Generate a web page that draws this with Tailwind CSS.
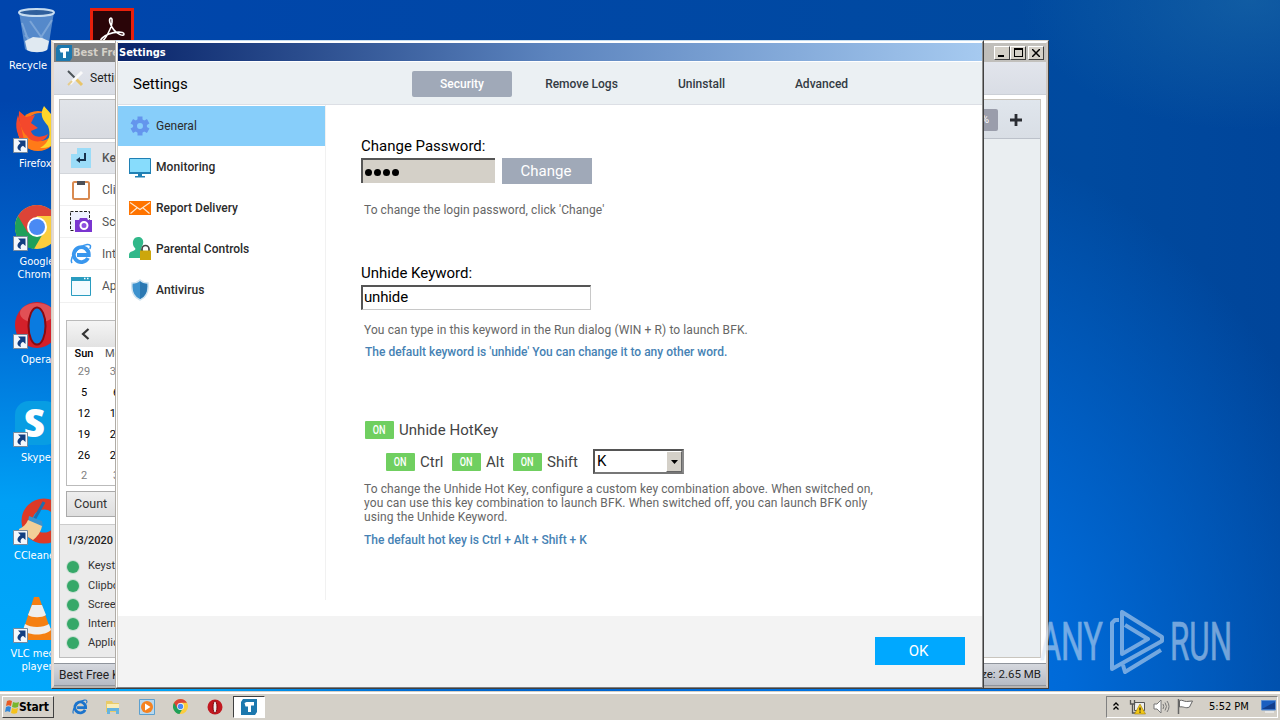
<!DOCTYPE html>
<html lang="en">

<head>
    <meta charset="UTF-8">
    <meta name="viewport" content="width=device-width, initial-scale=1.0">
    <title>Best Free Keylogger - Settings</title>
    <script src="https://cdn.jsdelivr.net/npm/@tailwindcss/browser@4"></script>
    <style>
        body {
            font-family: Roboto, "Liberation Sans", sans-serif;
        }

        .tahoma {
            font-family: "DejaVu Sans Condensed", "DejaVu Sans", sans-serif;
            font-stretch: condensed;
        }

        .wallpaper {
            background:
                radial-gradient(ellipse 230px 130px at 1250px 0, rgba(30, 110, 170, .55), transparent),
                radial-gradient(ellipse 620px 620px at 0 720px, #00aafd 0, #00a0f5 35%, rgba(0, 120, 225, .75) 65%, rgba(0, 80, 190, 0) 100%),
                radial-gradient(ellipse 520px 600px at 860px 720px, #0078e8 0, #006ad8 40%, rgba(0, 76, 170, 0) 100%),
                linear-gradient(90deg, #0045ad, #004a9f 85%, #00459a);
        }
    </style>
</head>

<body>
    <svg class="hidden">
        <symbol id="shortcut" viewBox="0 0 15 15">
            <path d="M.5.5h14v14H.5z" fill="#f4f8fc" stroke="#7a8a9c" />
            <path d="M5 2.500h7.500V10L10 7.700C7.500 9 7 10.500 8 13 4.500 12 2.500 9 7.500 5z" fill="#123e80" />
        </symbol>
        <symbol id="chrome" viewBox="0 0 44 44">
            <circle cx="22" cy="22" r="22" fill="#fbcd3e" />
            <path d="M3 11a22 22 0 0 0 16 33l9-15.500-6-7z" fill="#1fa05a" />
            <path d="M3 11 13 28l9-17h19A22 22 0 0 0 3 11z" fill="#dc4437" />
            <circle cx="22" cy="22" r="10" fill="#fff" />
            <circle cx="22" cy="22" r="8" fill="#4a8af4" />
        </symbol>
        <symbol id="opera" viewBox="0 0 44 46">
            <ellipse cx="22" cy="23" rx="22" ry="23" fill="#d3202a" />
            <ellipse cx="22" cy="11" rx="17" ry="10" fill="#f08080" opacity=".5" />
            <ellipse cx="22" cy="24" rx="8.500" ry="18.500" fill="#0a7be0" stroke="#8b0a10" stroke-width="2" />
        </symbol>
        <symbol id="ie" viewBox="0 0 22 22">
            <path d="M18 15a7.500 7.500 0 1 1 .8-3H7" fill="none" stroke="currentColor" stroke-width="3.800" />
            <path d="M2 20C-1 15 8 3 17 1.500c4-.5 4 2 2.800 4.500" fill="none" stroke="currentColor" stroke-width="1.500" />
        </symbol>
        <symbol id="bfk" viewBox="0 0 16 16">
            <path d="M2 0h14v13l-2 3H0V3z" fill="#1c78ae" />
            <path d="M3.500 4l2-1h7.500v3.500h-3V13H7V7.500H4.500z" fill="#fff" />
        </symbol>
    </svg>

    <div class="wallpaper relative h-[720px] w-[1280px] overflow-hidden">

        <!-- Desktop shortcuts -->
        <div class="tahoma text-[11px] leading-[13px] text-white">
            <svg class="absolute left-[18px] top-[8px]" width="38" height="46" viewBox="0 0 38 46">
                <path d="M1 4l6 37c4 4 19 4 23 0l6-37z" fill="#6a9ad2" opacity=".8" />
                <path d="M4 15l8 22M12 13l14 20M34 12 20 34M7 27l10 10" stroke="#b5cfec" stroke-width="2" opacity=".4" />
                <path d="M7 33l8-4 9 1 7 3-2 9c-5 3-15 3-20 0z" fill="#e0e9f1" />
                <ellipse cx="18.500" cy="4.500" rx="17.500" ry="3.500" fill="#2f5f9c" stroke="#c6dcf0" stroke-width="2" />
            </svg>
            <p class="absolute left-[9px] top-[59px]">Recycle</p>

            <svg class="absolute left-[90px] top-[8px]" width="44" height="44" viewBox="0 0 44 44">
                <path d="M1.500 1.500h41v41h-41z" fill="#2a0508" stroke="#e8200c" stroke-width="3" />
                <path d="M21 10c-3 1-1 7 3 12 3 4 10 7 10 4s-10-2-15 0c-6 2-9 6-8 7 3 2 12-15 11-21 0-1-.5-2-1-2z" fill="none" stroke="#fff" stroke-width="1.600" />
            </svg>

            <svg class="absolute left-[14px] top-[106px]" width="46" height="46" viewBox="0 0 46 46">
                <circle cx="24" cy="25" r="20" fill="#ff7a18" />
                <circle cx="26" cy="21" r="14" fill="#1464c8" />
                <path d="M5 5l7 6 9-2-4 8 7 5-7 3c2 7 10 7 17 3-3 10-17 9-21 2C8 26 4 15 5 5z" fill="#f4482c" />
                <path d="M4 9c-4 12-1 22 7 28-3-9-3-16-7-28z" fill="#f4482c" />
                <path d="M30 0c-5 9-1 14 4 20 3 8 2 16-8 22 12 1 19-7 19-17S35 6 30 0z" fill="#ffd52a" />
            </svg>
            <svg class="absolute left-[13px] top-[138px]" width="15" height="15"><use href="#shortcut" /></svg>
            <p class="absolute left-[19px] top-[157px]">Firefox</p>

            <svg class="absolute left-[15px] top-[205px]" width="44" height="44"><use href="#chrome" /></svg>
            <svg class="absolute left-[13px] top-[236px]" width="15" height="15"><use href="#shortcut" /></svg>
            <p class="absolute left-[17px] top-[255px] w-[40px] text-center">Google Chrome</p>

            <svg class="absolute left-[15px] top-[302px]" width="44" height="46"><use href="#opera" /></svg>
            <svg class="absolute left-[13px] top-[334px]" width="15" height="15"><use href="#shortcut" /></svg>
            <p class="absolute left-[21px] top-[353px]">Opera</p>

            <div class="absolute left-[15px] top-[401px] h-[44px] w-[44px] rounded-[14px] bg-[#089de3] pl-[9px] font-['Open_Sans'] text-[39px] leading-[42px] font-extrabold"><span class="inline-block origin-left scale-x-118">S</span></div>
            <svg class="absolute left-[13px] top-[432px]" width="15" height="15"><use href="#shortcut" /></svg>
            <p class="absolute left-[21px] top-[451px]">Skype</p>

            <svg class="absolute left-[19px] top-[498px]" width="44" height="46" viewBox="0 0 44 46">
                <circle cx="25" cy="23" r="17" fill="none" stroke="#dd3a26" stroke-width="11" />
                <path d="M25 4 15 22" stroke="#1f6fae" stroke-width="3" />
                <path d="M10 18l13 5 1 6-15-5z" fill="#3b93cf" />
                <path d="M9 22l14 6c-1 6-5 11-9 14L-2 32c5-2 9-5 11-10z" fill="#f2cf98" />
            </svg>
            <svg class="absolute left-[13px] top-[530px]" width="15" height="15"><use href="#shortcut" /></svg>
            <p class="absolute left-[14px] top-[549px]">CCleaner</p>

            <svg class="absolute left-[16px] top-[595px]" width="44" height="46" viewBox="0 0 44 46">
                <path d="M7 33h29l6 12H3z" fill="#f57f12" />
                <path d="M18 2h5l12 34c-6 5-22 5-28 0z" fill="#f57f12" />
                <path d="M16 10h10l4 10c-4 3-14 3-18 0zM9 29c6 4 18 4 24 0l2 6c-6 6-22 6-28 0z" fill="#eee" />
            </svg>
            <svg class="absolute left-[13px] top-[628px]" width="15" height="15"><use href="#shortcut" /></svg>
            <p class="absolute left-[9px] top-[647px] w-[56px] text-center">VLC media player</p>
        </div>

        <!-- Main window -->
        <div class="absolute left-[51px] top-[40px] flex h-[649px] w-[998px] flex-col overflow-hidden border border-t-[#d4d0c8] border-r-[#404040] border-b-[#404040] border-l-[#d4d0c8] bg-white">
            <div class="flex grow flex-col border-2 border-t-white border-r-[#cfc8c2] border-b-[#b8b4b0] border-l-[#e6dad0]">
                <div class="flex h-[19px] shrink-0 items-center bg-linear-to-r from-[#808080] to-[#c4c2be] pr-[2px] pl-[2px]">
                    <svg width="16" height="16"><use href="#bfk" /></svg>
                    <span class="tahoma ml-[1px] pt-[2px] text-[11px] font-bold text-[#d4d0c8]">Best Free Keylogger</span>
                    <div class="ml-auto flex">
                        <div class="flex h-[14px] w-[16px] items-end border border-t-white border-r-[#404040] border-b-[#404040] border-l-white bg-[#d4d0c8] pb-[2px] pl-[3px]"><i class="h-[2px] w-[6px] bg-black"></i></div>
                        <div class="flex h-[14px] w-[16px] items-center justify-center border border-t-white border-r-[#404040] border-b-[#404040] border-l-white bg-[#d4d0c8]"><i class="h-[9px] w-[9px] border border-t-2 border-black"></i></div>
                        <div class="ml-[2px] flex h-[14px] w-[16px] items-center justify-center border border-t-white border-r-[#404040] border-b-[#404040] border-l-white bg-[#d4d0c8]">
                            <svg width="8" height="8" viewBox="0 0 8 8" stroke="#000" stroke-width="1.500"><path d="M0 0l8 8M8 0 0 8" /></svg>
                        </div>
                    </div>
                </div>
                <div class="flex h-[33px] shrink-0 items-center border-b border-[#ccd0d7] bg-linear-to-b from-[#e2e5ec] to-[#d9dde5] pl-[13px]">
                    <svg width="17" height="17" viewBox="0 0 17 17">
                        <path d="M1 1l8 8" stroke="#4b5257" stroke-width="2" />
                        <path d="M9 9l6 6" stroke="#e8c468" stroke-width="3" />
                        <path d="M15 2l-4 4L3 14" stroke="#fafafa" stroke-width="3" />
                        <path d="M1 15l4-4" stroke="#e5cc8d" stroke-width="2" />
                    </svg>
                    <span class="ml-[6px] text-[12px] text-[#222]">Settings</span>
                </div>
                <div class="flex h-[568px] shrink-0 px-[5px] pt-[4px] pb-[5px]">
                    <!-- Left column, mostly covered by the dialog -->
                    <div class="flex w-[300px] flex-col border border-[#bdbdbd] text-[#555]">
                        <div class="h-[39px] shrink-0 border-b border-[#c0c4ca] bg-linear-to-b from-[#e1e4e9] to-[#d8dbe1]"></div>
                        <div class="mt-[3px] flex h-[32px] shrink-0 items-center border-y border-[#d3d6db] bg-[#e2e5ea] pl-[11px]">
                            <svg width="20" height="20" viewBox="0 0 20 20"><path d="M6 0h14v20H0V6h6z" fill="#9bdcf8" /><path d="M14 5v7H8" fill="none" stroke="#17324d" stroke-width="2" /><path d="M5 12l4-3v6z" fill="#17324d" /></svg>
                            <span class="ml-[11px] text-[12px] font-medium">Keystrokes</span>
                        </div>
                        <div class="flex h-[32px] shrink-0 items-center border-b border-[#f0f0f0] pl-[12px]">
                            <svg width="18" height="20" viewBox="0 0 18 20"><rect x="1" y="2" width="16" height="17" rx="1.500" fill="#fff" stroke="#d98a50" stroke-width="2" /><path d="M5 1h8v4H5z" fill="#4c5058" /></svg>
                            <span class="ml-[12px] text-[12px]">Clipboard</span>
                        </div>
                        <div class="flex h-[32px] shrink-0 items-center border-b border-[#f0f0f0] pl-[10px]">
                            <svg width="22" height="22" viewBox="0 0 22 22"><path d="M.5.500h19v19H.5z" fill="#eef1ff" stroke="#222" stroke-dasharray="3 1.500" /><path d="M5 9h4l1-2h7l1 2h4v12H5z" fill="#7a35d0" /><circle cx="14" cy="14.500" r="3.500" fill="#8e4fe0" stroke="#fff" stroke-width="2" /></svg>
                            <span class="ml-[10px] text-[12px]">Screenshots</span>
                        </div>
                        <div class="flex h-[32px] shrink-0 items-center border-b border-[#f0f0f0] pl-[10px] ">
                            <svg class="text-[#3997ee]" width="22" height="22"><use href="#ie" /></svg>
                            <span class="ml-[10px] text-[12px]">Internet</span>
                        </div>
                        <div class="flex h-[33px] shrink-0 items-center border-b border-[#f0f0f0] pl-[11px]">
                            <svg width="20" height="19" viewBox="0 0 20 19"><path d="M.5.500h19v18H.5z" fill="#f3fbff" stroke="#2a9cc0" /><path d="M0 0h20v4H0z" fill="#2a9cc0" /><path d="M13 1.500h1.500M16 1.500h1.500" stroke="#fff" stroke-width="1.500" /></svg>
                            <span class="ml-[11px] text-[12px]">Applications</span>
                        </div>
                        <!-- Calendar -->
                        <div class="mt-[17px] ml-[6px] h-[166px] shrink-0 border border-[#bbb] text-[11px] text-black">
                            <div class="flex h-[26px] items-center bg-linear-to-b from-[#f5f5f5] to-[#e2e2e2] pl-[14px]">
                                <svg width="9" height="12" viewBox="0 0 9 12"><path d="M7.500 1 2 6l5.500 5" fill="none" stroke="#333" stroke-width="2.200" /></svg>
                            </div>
                            <div class="grid w-[64px] grid-cols-[34px_30px] text-center leading-[13px]">
                                <b class="font-medium">Sun</b><span class="text-[#555]">Mon</span>
                            </div>
                            <div class="grid w-[64px] grid-cols-[34px_30px] pt-[1px] text-center leading-[21px]">
                                <span class="text-[#808080]">29</span><span class="text-[#808080]">30</span>
                                <span>5</span><span>6</span>
                                <span>12</span><span>13</span>
                                <span>19</span><span>20</span>
                                <span>26</span><span>27</span>
                                <span class="leading-[19px] text-[#808080]">2</span><span class="leading-[19px] text-[#808080]">3</span>
                            </div>
                        </div>
                        <div class="mt-[5px] ml-[6px] flex h-[26px] shrink-0 items-center border border-[#aaa] bg-linear-to-b from-[#eee] to-[#dedede] pl-[7px] text-[12.5px] text-[#333]">Count</div>
                        <div class="mt-[7px] grow border-t border-[#ccc] bg-[#ebebeb] pt-[6px] pl-[7px] text-[11px] text-[#333]">
                            <p class="leading-[20px] font-medium text-[#222]">1/3/2020 Log</p>
                            <div class="mt-[6px] flex h-[19.2px] items-center gap-[9px]"><i class="h-[12px] w-[12px] rounded-full bg-[#35a868] ring-1 ring-[#35a868]/20"></i>Keystrokes</div>
                            <div class="flex h-[19.2px] items-center gap-[9px]"><i class="h-[12px] w-[12px] rounded-full bg-[#35a868] ring-1 ring-[#35a868]/20"></i>Clipboard</div>
                            <div class="flex h-[19.2px] items-center gap-[9px]"><i class="h-[12px] w-[12px] rounded-full bg-[#35a868] ring-1 ring-[#35a868]/20"></i>Screenshots</div>
                            <div class="flex h-[19.2px] items-center gap-[9px]"><i class="h-[12px] w-[12px] rounded-full bg-[#35a868] ring-1 ring-[#35a868]/20"></i>Internet</div>
                            <div class="flex h-[19.2px] items-center gap-[9px]"><i class="h-[12px] w-[12px] rounded-full bg-[#35a868] ring-1 ring-[#35a868]/20"></i>Applications</div>
                        </div>
                    </div>
                    <div class="ml-[5px] grow border border-[#c9c5be] bg-[#eaeef1]">
                        <div class="flex h-[39px] items-center justify-end border-b border-[#bcc1ca] bg-linear-to-b from-[#e0e6ed] to-[#d9dee5] pt-[2px] pr-[18px]">
                            <span class="flex h-[22px] w-[44px] items-center justify-end rounded-[2px] bg-[#9a9dab] pr-[9px] text-[11px] text-white">100%</span>
                            <svg class="ml-[12px]" width="12" height="12" viewBox="0 0 12 12"><path d="M6 0v12M0 6h12" stroke="#2a2d33" stroke-width="2.800" /></svg>
                        </div>
                    </div>
                </div>
                <div class="flex grow items-center justify-between border-t border-b border-[#8f949c] bg-linear-to-b from-[#d5d8de] to-[#b6bbc4] px-[5px] text-[12px] text-[#222]">
                    <span>Best Free Keylogger</span>
                    <span class="text-[11.5px]">Log Size: 2.65 MB</span>
                </div>
            </div>
        </div>

        <!-- Settings dialog -->
        <div class="absolute left-[115px] top-[40px] flex h-[649px] w-[869px] flex-col border border-t-[#c4dcf0] border-r-[#404040] border-b-[#404040] border-l-[#b0aca6] bg-white">
            <div class="flex grow flex-col border border-t-white border-r-[#909090] border-b-[#808080] border-l-white">
                <div class="flex grow flex-col border-l border-[#d4d0c8]">
                    <div class="tahoma mt-[1px] flex h-[18px] items-center bg-linear-to-r from-[#0a246a] via-[#5c84be] to-[#a6caf0] pt-[2px] pl-[1px] text-[11px] font-bold text-white">Settings</div>
                    <div class="mt-[1px] flex h-[43px] shrink-0 items-center border-b border-[#dcdfe5] bg-[#ebf0f3] pt-[2px] pl-[15px] text-[12px] font-medium text-[#333b44]">
                        <span class="w-[279px] text-[15px] font-normal text-black">Settings</span>
                        <div class="grid h-[26px] grid-cols-4 gap-[20px] text-center leading-[26px]">
                            <span class="w-[100px] rounded-[2px] bg-[#a0a9b8] text-white">Security</span>
                            <span class="w-[99px]">Remove Logs</span>
                            <span class="w-[99px]">Uninstall</span>
                            <span class="w-[99px]">Advanced</span>
                        </div>
                    </div>
                    <div class="flex h-[511px] shrink-0">
                        <nav class="flex h-[495px] w-[208px] shrink-0 flex-col gap-[1px] border-r border-[#f1f1f1] pt-[1px] text-[12px] font-medium text-[#2b2b2b]">
                            <div class="flex h-[40px] items-center bg-[#87cefa] pl-[11px]">
                                <svg width="22" height="22" viewBox="0 0 22 22"><path d="M11 1.500v19M2.800 6.250l16.400 9.500M2.800 15.750l16.400-9.500" stroke="#6495ed" stroke-width="5" /><circle cx="11" cy="11" r="5" fill="#87cefa" stroke="#6495ed" stroke-width="4" /></svg>
                                <span class="ml-[5px] font-normal">General</span>
                            </div>
                            <div class="flex h-[40px] items-center pl-[11px]">
                                <svg width="22" height="22" viewBox="0 0 22 22"><path d="M.5 2.500h21v15H.5z" fill="#87dcfc" stroke="#2080b4" /><path d="M0 16h22v2H0zM9 18h4v2h3v1.500H6V20h3z" fill="#2080b4" /></svg>
                                <span class="ml-[5px] tracking-[0.1px]">Monitoring</span>
                            </div>
                            <div class="flex h-[40px] items-center pl-[11px]">
                                <svg width="22" height="14" viewBox="0 0 22 14"><path d="M0 0h22v14H0z" fill="#ff7400" /><path d="M1 1.500l10 7 10-7M1.500 12.500l7-6M20.500 12.500l-7-6" fill="none" stroke="#ffe9d2" stroke-width="1.100" /></svg>
                                <span class="ml-[5px]">Report Delivery</span>
                            </div>
                            <div class="flex h-[40px] items-center pl-[11px]">
                                <svg width="22" height="24" viewBox="0 0 22 24"><path d="M9 0c4 0 6 3 5 7-.5 2-1.500 3-2 4.500 0 2 5 2.500 6 5.500l-1 4H0c0-5 0-5.500 4-7 2-.7 3-1.500 2-3C2 7 4 0 9 0z" fill="#31b88a" /><path d="M13 14v-2a3.500 3.500 0 0 1 7 0v2" fill="none" stroke="#444" stroke-width="1.700" /><path d="M11 13.500h11V23H11z" fill="#cca70c" /></svg>
                                <span class="ml-[5px]">Parental Controls</span>
                            </div>
                            <div class="flex h-[40px] items-center pl-[11px]">
                                <svg width="22" height="22" viewBox="0 0 22 22"><path d="M3 4c3 0 6-1 8-3 2 2 5 3 8 3 1 8-1 14-8 17C4 18 2 12 3 4z" fill="#3d92ce" stroke="#d3e4ef" stroke-width="1.500" /><path d="M11 2.500c2 1.700 4 2.300 7 2.500.5 7-1 12-7 15z" fill="#2b78b2" /></svg>
                                <span class="ml-[5px] tracking-[0.1px]">Antivirus</span>
                            </div>
                        </nav>
                        <div class="flex flex-col pt-[32px] pl-[35px] text-[12px] text-[#666]">
                            <label class="text-[15px] leading-[18px] text-black">Change Password:</label>
                            <div class="mt-[3px] flex">
                                <div class="flex h-[25px] w-[134px] items-center gap-[2px] border-t-2 border-l-2 border-t-[#555] border-l-[#555] bg-[#d4d0c8] pt-[1px] pl-[2px]">
                                    <i class="h-[7px] w-[7px] rounded-full bg-black"></i>
                                    <i class="h-[7px] w-[7px] rounded-full bg-black"></i>
                                    <i class="h-[7px] w-[7px] rounded-full bg-black"></i>
                                    <i class="h-[7px] w-[7px] rounded-full bg-black"></i>
                                </div>
                                <button class="ml-[7px] h-[26px] w-[90px] bg-[#a0a9b8] pr-[2px] text-[15px] leading-[26px] text-white">Change</button>
                            </div>
                            <p class="mt-[19px] ml-[3px] leading-[14px] tracking-[0.07px]">To change the login password, click 'Change'</p>

                            <label class="mt-[47px] text-[15px] leading-[18px] text-black">Unhide Keyword:</label>
                            <div class="mt-[3px] h-[25px] w-[230px] border border-t-2 border-l-2 border-t-[#555] border-r-[#c8c8c8] border-b-[#c8c8c8] border-l-[#555] pl-[1px] text-[15px] leading-[20px] tracking-[-0.15px] text-black">unhide</div>
                            <p class="mt-[13px] ml-[3px] leading-[14px] tracking-[0.1px]">You can type in this keyword in the Run dialog (WIN + R) to launch BFK.</p>
                            <p class="mt-[8px] ml-[4px] leading-[14px] font-medium text-[#4682b4]">The default keyword is 'unhide' You can change it to any other word.</p>

                            <div class="mt-[62px] ml-[4px] flex h-[18px] items-center text-[15px] tracking-[0.05px] text-[#444]">
                                <span class="flex h-[18px] w-[29px] items-center justify-center rounded-[1px] bg-[#70cf60] text-[13px] font-medium text-white"><span class="scale-x-70">ON</span></span>
                                <span class="ml-[5px]">Unhide HotKey</span>
                            </div>
                            <div class="mt-[11px] ml-[25px] flex h-[24px] items-center text-[15px] text-[#444]">
                                <span class="flex h-[18px] w-[29px] items-center justify-center rounded-[1px] bg-[#70cf60] text-[13px] font-medium text-white"><span class="scale-x-70">ON</span></span>
                                <span class="ml-[5px] w-[32px]">Ctrl</span>
                                <span class="flex h-[18px] w-[29px] items-center justify-center rounded-[1px] bg-[#70cf60] text-[13px] font-medium text-white"><span class="scale-x-70">ON</span></span>
                                <span class="ml-[5px] w-[27px]">Alt</span>
                                <span class="flex h-[18px] w-[29px] items-center justify-center rounded-[1px] bg-[#70cf60] text-[13px] font-medium text-white"><span class="scale-x-70">ON</span></span>
                                <span class="ml-[5px] w-[46px]">Shift</span>
                                <div class="mb-[1px] flex h-[25px] w-[91px] items-center justify-between border-2 border-t-[#555] border-r-[#8a8a8a] border-b-[#777] border-l-[#555] pl-[2px] text-black">K
                                    <div class="flex h-[21px] w-[16px] items-center justify-center border border-t-white border-r-[#666] border-b-[#666] border-l-white bg-[#d4d0c8]">
                                        <svg width="7" height="4" viewBox="0 0 7 4"><path d="M0 0h7L3.500 4z" /></svg>
                                    </div>
                                </div>
                            </div>
                            <p class="mt-[8px] ml-[3px] leading-[14px] tracking-[0.1px] whitespace-nowrap">To change the Unhide Hot Key, configure a custom key combination above. When switched on,<br>you can use this key combination to launch BFK. When switched off, you can launch BFK only<br>using the Unhide Keyword.</p>
                            <p class="mt-[9px] ml-[3px] leading-[14px] font-medium text-[#4682b4]">The default hot key is Ctrl + Alt + Shift + K</p>
                        </div>
                    </div>
                    <div class="flex grow items-start justify-end bg-[#f3f3f3] pt-[21px] pr-[17px]">
                        <button class="h-[28px] w-[90px] bg-[#00a8ff] pr-[3px] text-[15px] leading-[28px] text-white">OK</button>
                    </div>
                </div>
            </div>
        </div>

        <!-- Watermark -->
        <svg class="absolute left-[1036px] top-[606px] overflow-visible" width="200" height="72" viewBox="0 0 200 72" opacity=".55">
            <g fill="#d2e2f4" stroke="#d2e2f4" stroke-width=".6" font-family="Roboto" font-size="53">
                <text x="4" y="54" textLength="63" lengthAdjust="spacingAndGlyphs">ANY</text>
                <text x="134" y="54" textLength="62" lengthAdjust="spacingAndGlyphs">RUN</text>
            </g>
            <path d="M83 14h-4l-3 3v46l7-4 43-24v-4L86 6v42l26-15-23-14M87 59l2 7 36-22" fill="none" stroke="#d2e2f4" stroke-width="4" stroke-linejoin="round" />
        </svg>

        <!-- Taskbar -->
        <div class="tahoma absolute inset-x-0 bottom-0 flex h-[29px] items-center border-t border-[#d4d0c8] bg-[#d4d0c8] pt-[1px] pl-[2px] shadow-[inset_0_2px_0_#fff]">
            <div class="flex h-[22px] w-[52px] items-center border border-t-white border-r-[#404040] border-b-[#404040] border-l-white pl-[1px] text-[12px] font-bold text-black">
                <svg class="shrink-0" width="16" height="15" viewBox="0 0 16 15">
                    <path d="M3 2c2-1 3-1 5 0L7 7C5 6 4 6 2 7z" fill="#e85a22" />
                    <path d="M9 3c2 1 4 1 6 0l-1 5c-2 1-4 1-6 0z" fill="#78b62c" />
                    <path d="M2 8c2-1 3-1 5 0l-1 5c-2-1-3-1-5 0z" fill="#2f86d8" />
                    <path d="M8 9c2 1 4 1 6 0l-1 5c-2 1-4 1-6 0z" fill="#f5c21c" />
                </svg>
                <span class="-ml-px tracking-[-0.2px]">Start</span>
            </div>
            <svg class="ml-[18px] text-[#1c74cc]" width="16" height="16" viewBox="0 0 22 22"><use href="#ie" width="22" height="22" /></svg>
            <svg class="ml-[17px]" width="16" height="16" viewBox="0 0 16 16"><path d="M1 2h6l1 2h6v9H1z" fill="#e9cb68" /><path d="M2 5h12v7H2z" fill="#faeeb8" /><path d="M2 15V9h12v6h-3v-3H5v3z" fill="#66b4df" /></svg>
            <svg class="ml-[18px]" width="16" height="16" viewBox="0 0 16 16"><path d="M.5.500h15v15H.5z" fill="#b8d8ee" stroke="#5ca0cf" /><circle cx="8" cy="8" r="6" fill="#f58220" /><path d="M6 4.500v7L11.500 8z" fill="#fff" /></svg>
            <svg class="ml-[18px]" width="15" height="15"><use href="#chrome" /></svg>
            <svg class="ml-[19px]" width="16" height="16" viewBox="0 0 16 16"><circle cx="8" cy="8" r="7.500" fill="#c21820" /><ellipse cx="8" cy="8" rx="2" ry="6" fill="#eee" stroke="#7b080c" /></svg>
            <div class="ml-[10px] flex h-[22px] w-[32px] items-center justify-center border border-t-[#404040] border-r-white border-b-white border-l-[#404040] bg-white">
                <svg width="16" height="16"><use href="#bfk" /></svg>
            </div>
            <div class="mr-[2px] ml-auto flex h-[22px] w-[172px] items-center border border-t-[#808080] border-r-white border-b-white border-l-[#808080] pl-[6px] text-[11px] text-black">
                <svg width="6" height="9" viewBox="0 0 6 9"><path d="M.5 3.500 3 1l2.500 2.500M.5 7.500 3 5l2.500 2.500" fill="none" stroke="#000" stroke-width="1.300" /></svg>
                <svg class="ml-[10px]" width="17" height="16" viewBox="0 0 17 16"><path d="M5.500 3.500h10v8h-10z" fill="#eee" stroke="#555" /><path d="M1.500 1v4h4V1M3.500 5v9h5" fill="none" stroke="#555" stroke-width="1.300" /><path d="M11 5l5.500 10h-11z" fill="#f2c714" stroke="#a08010" stroke-width=".6" /><path d="M11 8.500v3M11 12.500v1.200" stroke="#222" stroke-width="1.300" /></svg>
                <svg class="ml-[7px]" width="17" height="15" viewBox="0 0 17 15" fill="none" stroke="#777"><path d="M1 5h3l4-4v13l-4-4H1z" fill="#fff" /><path d="M10 5q1.500 2.500 0 5M12 3.500q3 4 0 8M14 2q4 5.500 0 11" /></svg>
                <svg class="ml-[7px]" width="17" height="15" viewBox="0 0 17 15"><path d="M2.500 1.500c3-1 4 1 7 1l6-.5-3 6c-4 2-6-1-10 0z" fill="#fff" stroke="#666" /><path d="M1.500 0v15" stroke="#666" stroke-width="1.500" /></svg>
                <span class="ml-[15px] pt-[2px] whitespace-nowrap">5:52 PM</span>
                <svg class="ml-auto mr-px shrink-0" width="15" height="13" viewBox="0 0 15 13"><path d="M.5.500h14v9.500H.5z" fill="#1b5fc0" stroke="#5d8fd0" /><path d="M1 9 14 2v7z" fill="#123f8c" /><path d="M4 12h9" stroke="#eee" stroke-width="1.500" /></svg>
            </div>
        </div>
    </div>
</body>

</html>
